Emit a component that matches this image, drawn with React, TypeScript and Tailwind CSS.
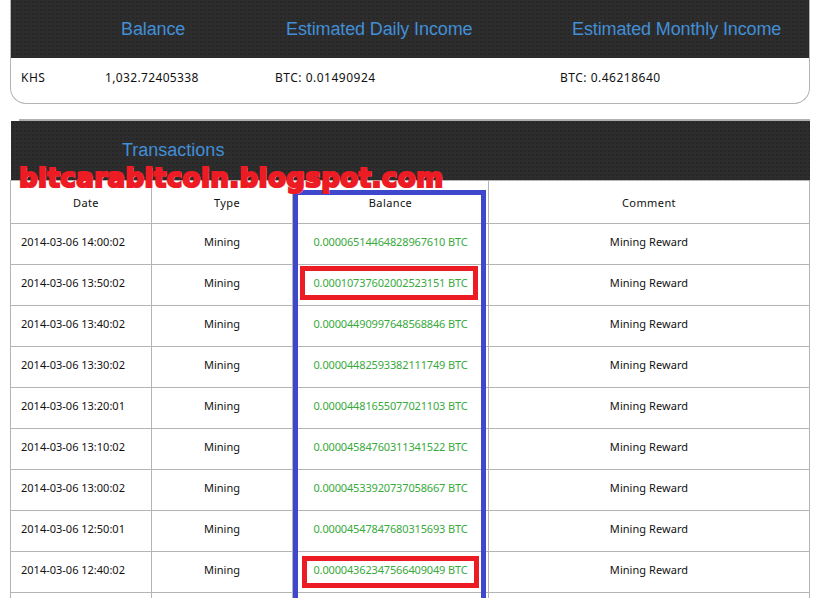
const rows = [
  ["2014-03-06 14:00:02", "0.00006514464828967610 BTC"],
  ["2014-03-06 13:50:02", "0.00010737602002523151 BTC"],
  ["2014-03-06 13:40:02", "0.00004490997648568846 BTC"],
  ["2014-03-06 13:30:02", "0.00004482593382111749 BTC"],
  ["2014-03-06 13:20:01", "0.00004481655077021103 BTC"],
  ["2014-03-06 13:10:02", "0.00004584760311341522 BTC"],
  ["2014-03-06 13:00:02", "0.00004533920737058667 BTC"],
  ["2014-03-06 12:50:01", "0.00004547847680315693 BTC"],
  ["2014-03-06 12:40:02", "0.00004362347566409049 BTC"],
];

const darkBar =
  "bg-[#2d2d2d] bg-[radial-gradient(circle,#272727_1px,transparent_1.5px)] bg-[length:4px_4px]";
const cell = "border border-[#b4b4b4]";

export default function App() {
  return (
    <div className="relative h-[598px] w-[821px] overflow-hidden bg-white font-['Noto_Sans',sans-serif] text-[#111111]">
      {/* Balance panel */}
      <div className="ml-[10px] h-[104px] w-[800px] overflow-hidden rounded-b-[16px] border-x border-b border-[#b4b4b4]">
        <div className={`grid h-[58px] grid-cols-[94px_170px_285px_1fr] items-center font-['Liberation_Sans',sans-serif] text-[18px] tracking-[-0.12px] text-[#428fd8] ${darkBar}`}>
          <span />
          <span className="pl-[16px]">Balance</span>
          <span className="pl-[11px]">Estimated Daily Income</span>
          <span className="pl-[12px]">Estimated Monthly Income</span>
        </div>
        <div className="grid h-[38px] grid-cols-[94px_170px_285px_1fr] items-center pt-[2px] text-[12px] tracking-[0.5px]">
          <span className="pl-[10px]">KHS</span>
          <span className="tracking-[0.35px]">1,032.72405338</span>
          <span>BTC: 0.01490924</span>
          <span>BTC: 0.46218640</span>
        </div>
      </div>

      {/* Transactions panel */}
      <div className="ml-[10px] mt-[15px] w-[800px]">
        <div className="ml-[9px] h-[2px] bg-[#b0b0b0]" />
        <div className={`ml-px h-[59px] pl-[111px] pt-[19px] font-['Liberation_Sans',sans-serif] text-[18px] leading-[21px] text-[#428fd8] ${darkBar}`}>
          Transactions
        </div>
        <table className="w-[800px] table-fixed border-collapse text-[11px]">
          <colgroup>
            <col className="w-[141px]" />
            <col className="w-[141px]" />
            <col className="w-[196px]" />
            <col />
          </colgroup>
          <thead>
            <tr className="h-[43px] tracking-[0.4px]">
              <th className={`${cell} pl-[10px] pt-[2px] font-normal`}>Date</th>
              <th className={`${cell} pl-[10px] pt-[2px] font-normal`}>Type</th>
              <th className={`${cell} pt-[2px] font-normal`}>Balance</th>
              <th className={`${cell} pt-[2px] font-normal`}>Comment</th>
            </tr>
          </thead>
          <tbody>
            {rows.map(([date, balance]) => (
              <tr key={date} className="h-[41px]">
                <td className={`${cell} pb-[4px] pl-[10px]`}>{date}</td>
                <td className={`${cell} pb-[4px] text-center`}>Mining</td>
                <td className={`${cell} pb-[4px] text-center tracking-[-0.15px] text-[#38aa3c]`}>{balance}</td>
                <td className={`${cell} pb-[4px] text-center tracking-[0.05px]`}>Mining Reward</td>
              </tr>
            ))}
            <tr className="h-[41px]">
              <td className={cell} />
              <td className={cell} />
              <td className={cell} />
              <td className={cell} />
            </tr>
          </tbody>
        </table>
      </div>

      {/* Annotations painted on top of the screenshot */}
      <div className="absolute left-[293px] top-[190px] h-[420px] w-[193px] border-[5px] border-[#3f48cc]" />
      <div className="absolute left-[300px] top-[266px] h-[34px] w-[178px] border-[5px] border-[#ed1c24]" />
      <div className="absolute left-[302px] top-[556px] h-[32px] w-[177px] border-[5px] border-[#ed1c24]" />
      <div className="absolute left-[19px] top-[160px] font-['DejaVu_Sans',sans-serif] text-[26px] font-bold leading-[36px] tracking-[0.45px] text-[#ed1c24] [-webkit-text-stroke:2.2px_#ed1c24] [text-shadow:1px_1px_0_#ffb4c4]">
        bitcarabitcoin.blogspot.com
      </div>
    </div>
  );
}
